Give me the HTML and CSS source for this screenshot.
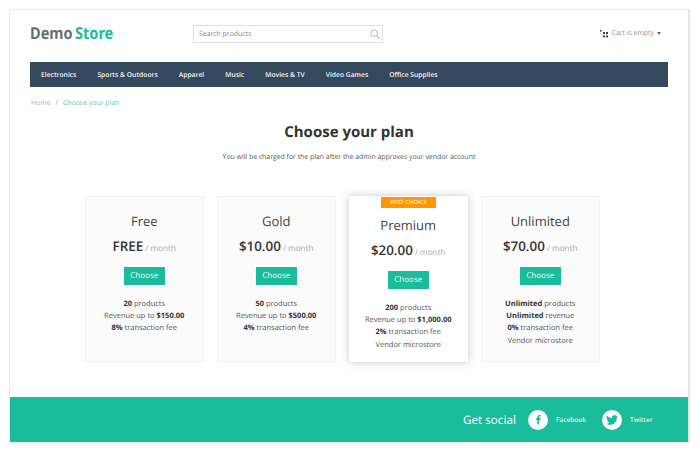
FILE: index.html
```html
<!DOCTYPE html>
<html lang="en">
<head>
<meta charset="utf-8">
<title>Choose your plan</title>
<link rel="stylesheet" href="styles.css">
</head>
<body>
<div class="frame">
  <header class="top">
    <div class="logo"><span class="logo-a">Demo</span> <span class="logo-b">Store</span></div>
    <div class="search">
      <span>Search products</span>
      <svg width="10" height="10" viewBox="0 0 10 10" fill="none" stroke="#bfc4c6" stroke-width="1.1"><circle cx="4.2" cy="4.2" r="3.2"/><path d="M6.6 6.6L9.5 9.5"/></svg>
    </div>
    <div class="cart">
      <svg width="8" height="8" viewBox="0 0 8 8" fill="#3a4650"><rect x="0" y="0" width="1.6" height="1.6"/><rect x="3" y="2" width="2" height="2"/><rect x="6" y="2" width="2" height="2"/><rect x="3" y="5.4" width="2" height="2"/><rect x="6" y="5.4" width="2" height="2"/></svg>
      <span>Cart is empty</span><i class="caret"></i>
    </div>
  </header>
  <nav class="nav">
    <a>Electronics</a><a>Sports &amp; Outdoors</a><a>Apparel</a><a>Music</a><a>Movies &amp; TV</a><a>Video Games</a><a>Office Supplies</a>
  </nav>
  <div class="crumbs"><span class="home">Home</span><span class="sep">/</span><span class="cur">Choose your plan</span></div>
  <h1 class="title">Choose your plan</h1>
  <p class="sub">You will be charged for the plan after the admin approves your vendor account</p>
  <section class="plans">
    <article class="plan">
      <h2>Free</h2>
      <div class="price"><b>FREE</b> <span>/ month</span></div>
      <a class="btn">Choose</a>
      <ul><li><b>20</b> products</li><li>Revenue up to <b>$150.00</b></li><li><b>8%</b> transaction fee</li></ul>
    </article>
    <article class="plan">
      <h2>Gold</h2>
      <div class="price"><b>$10.00</b> <span>/ month</span></div>
      <a class="btn">Choose</a>
      <ul><li><b>50</b> products</li><li>Revenue up to <b>$500.00</b></li><li><b>4%</b> transaction fee</li></ul>
    </article>
    <article class="plan best">
      <div class="badge">BEST CHOICE</div>
      <h2>Premium</h2>
      <div class="price"><b>$20.00</b> <span>/ month</span></div>
      <a class="btn">Choose</a>
      <ul><li><b>200</b> products</li><li>Revenue up to <b>$1,000.00</b></li><li><b>2%</b> transaction fee</li><li>Vendor microstore</li></ul>
    </article>
    <article class="plan">
      <h2>Unlimited</h2>
      <div class="price"><b>$70.00</b> <span>/ month</span></div>
      <a class="btn">Choose</a>
      <ul><li><b>Unlimited</b> products</li><li><b>Unlimited</b> revenue</li><li><b>0%</b> transaction fee</li><li>Vendor microstore</li></ul>
    </article>
  </section>
  <footer class="foot">
    <span class="social">Get social</span>
    <a class="net">
      <span class="disc"><svg width="11" height="11" viewBox="0 0 12 12" fill="#1abc9c"><path d="M4.7 11.5V6.6H3.2V4.7h1.5V3.4C4.7 1.8 5.6 1 7 1c.6 0 1.2.1 1.4.1v1.7h-.9c-.8 0-.9.4-.9.9v1h1.8l-.3 1.9H6.6v4.9z"/></svg></span>
      <span class="lbl">Facebook</span>
    </a>
    <a class="net">
      <span class="disc"><svg width="12" height="12" viewBox="0 0 24 24" fill="#1abc9c"><path d="M23.95 4.57a10 10 0 0 1-2.82.77 4.96 4.96 0 0 0 2.16-2.72c-.95.55-2 .96-3.12 1.18a4.92 4.92 0 0 0-8.38 4.48C7.69 8.1 4.07 6.13 1.64 3.16a4.82 4.82 0 0 0-.67 2.48c0 1.7.87 3.2 2.19 4.1a4.9 4.9 0 0 1-2.23-.62v.06a4.92 4.92 0 0 0 3.95 4.83 5 5 0 0 1-2.21.08 4.94 4.94 0 0 0 4.6 3.42A9.87 9.87 0 0 1 0 19.54a13.9 13.9 0 0 0 7.55 2.21c9.05 0 14-7.5 14-13.98 0-.21 0-.42-.02-.63A9.94 9.94 0 0 0 24 4.59z"/></svg></span>
      <span class="lbl">Twitter</span>
    </a>
  </footer>
</div>
</body>
</html>
```
FILE: styles.css
```css
* { box-sizing: border-box; }
html, body { margin: 0; padding: 0; background: #fff; }
body { font-family: "Open Sans", "Liberation Sans", sans-serif; color: #333; height: 453px; overflow: hidden; text-rendering: geometricPrecision; }
.frame {
  width: 681px; height: 434px; margin: 9px 0 0 9px;
  border: 1px solid #ececec; border-right: 2px solid #e6e6e6; border-bottom: 1px solid #ececec;
  box-shadow: 0 0 1px #e4e4e4;
  background: #fff; display: flex; flex-direction: column;
}
.top { height: 52px; padding: 14px 20px 0 20px; display: flex; align-items: flex-start; }
.logo { width: 163px; height: 18px; font-family: "Noto Sans", sans-serif; font-weight: 700; font-size: 16.5px; line-height: 18px; white-space: nowrap; word-spacing: -1.5px; transform: scaleX(0.88); transform-origin: left center; }
.logo-a { color: #686e73; }
.logo-b { color: #1abc9c; }
.search {
  width: 190px; height: 18px; margin-top: 1px; border: 1px solid #e1e1e1; padding: 0 2px 0 5px;
  display: flex; align-items: center; justify-content: space-between;
  font-size: 6.9px; color: #7f8486;
}
.cart { margin-left: auto; margin-right: 7px; margin-top: 5px; display: flex; align-items: center; gap: 3px; font-size: 6.9px; color: #8d9498; }
.cart svg { margin-right: 1px; }
.caret { width: 0; height: 0; border-left: 2.5px solid transparent; border-right: 2.5px solid transparent; border-top: 3px solid #667; }
.nav { margin: 0 20px; height: 25px; background: #34495e; display: flex; align-items: center; padding-left: 11px; gap: 21px; font-size: 6.75px; font-weight: 600; color: #f2f4f6; white-space: nowrap; }
.crumbs { margin: 12px 0 0 21px; height: 10px; font-size: 6.9px; line-height: 10px; display: flex; gap: 5px; }
.home { color: #a9b5ba; }
.sep { color: #9aa; }
.cur { color: #68bfae; }
.title { margin: 12px 0 0; text-align: center; font-size: 15px; line-height: 22px; font-weight: 700; color: #333; }
.sub { margin: 9px 0 0; text-align: center; font-size: 6.9px; line-height: 11px; color: #555; }
.plans { margin: 33px 0 0 75px; display: flex; gap: 13.5px; align-items: stretch; height: 166px; }
.plan { width: 118.5px; border: 1px solid #f3f3f3; background: #fbfbfb; text-align: center; padding-top: 15px; position: relative; }
.plan h2 { margin: 0; font-size: 13px; line-height: 18px; font-weight: 400; color: #444; }
.price { margin-top: 6px; line-height: 20px; font-size: 8.2px; color: #aaa; }
.price b { font-size: 13.4px; font-weight: 600; color: #333; }
.btn { display: block; width: 43px; height: 20px; margin: 7px auto 0; background: #1abc9c; border: 1px solid #fff; color: #e8faf6; font-size: 8px; line-height: 18px; }
.plan ul { list-style: none; margin: 12px 0 0; padding: 0; font-size: 7.5px; line-height: 12.2px; color: #555; }
.plan li b { font-weight: 700; color: #333; }
.best { background: #fff; border-color: #fff; box-shadow: 0 0 8px rgba(0,0,0,.22); padding-top: 19px; }
.badge { position: absolute; top: 0; left: 31px; width: 55px; height: 11px; background: #ff9800; color: #ffe3b8; font-size: 5.8px; font-weight: 600; line-height: 11px; }
.foot { margin-top: auto; height: 45px; background: #1abc9c; display: flex; align-items: center; padding-left: 453px; color: #fff; }
.social { font-size: 11.7px; width: 65px; white-space: nowrap; }
.net { display: flex; align-items: center; width: 74px; gap: 8px; font-size: 6.5px; font-weight: 600; color: #dff6f1; }
.disc { width: 20px; height: 20px; border-radius: 50%; background: #fff; display: flex; align-items: center; justify-content: center; flex: none; }
```
